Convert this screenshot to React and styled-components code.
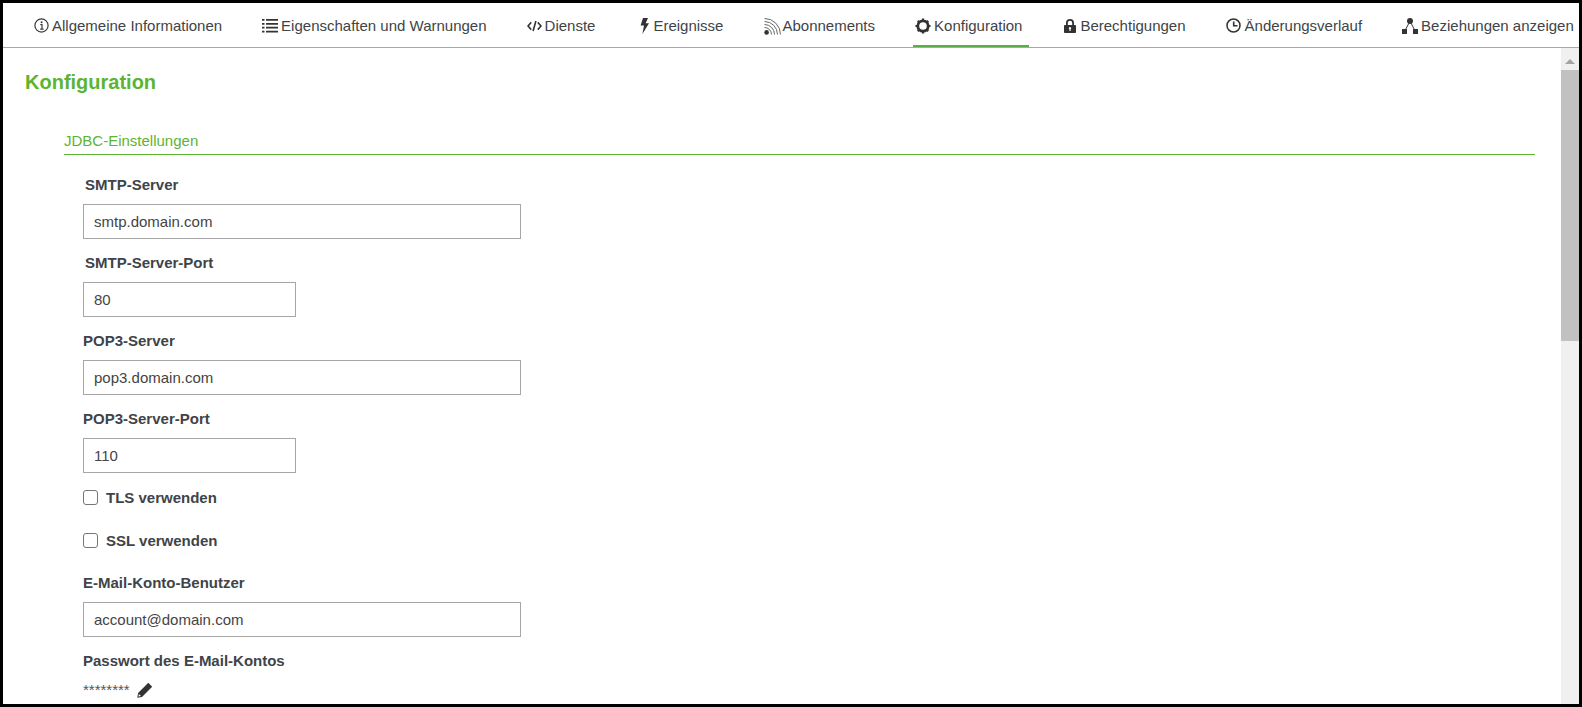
import React from "react";
import styled, { createGlobalStyle } from "styled-components";

const Global = createGlobalStyle`
  html, body { margin: 0; padding: 0; height: 100%; overflow: hidden; background: #fff; }
  * { box-sizing: border-box; }
`;

const Frame = styled.div`
  height: 707px;
  width: 1582px;
  border: 3px solid #000;
  display: flex;
  flex-direction: column;
  background: #fff;
  font-family: "Liberation Sans", Arial, sans-serif;
  color: #404448;
`;

const TabBar = styled.nav`
  height: 45px;
  flex: none;
  display: flex;
  align-items: stretch;
  padding-left: 29px;
  border-bottom: 1px solid #a9a9a9;
  overflow: hidden;
`;

const Tab = styled.a`
  display: flex;
  align-items: center;
  gap: ${(p) => p.$gap ?? 3}px;
  height: 45px;
  padding: 3px 7px 0 2px;
  margin-right: ${(p) => p.$after}px;
  font-size: 15px;
  white-space: nowrap;
  color: #404448;
  border-bottom: 3px solid ${(p) => (p.$active ? "#5cae47" : "transparent")};
  svg { flex: none; display: block; }
`;

const Body = styled.div`
  flex: 1;
  min-height: 0;
  display: flex;
`;

const Content = styled.main`
  flex: 1;
  min-width: 0;
  overflow: hidden;
  padding: 0 26px 0 22px;
`;

const ScrollRail = styled.div`
  flex: none;
  width: 18px;
  display: flex;
  flex-direction: column;
  background: #f0f0f0;
`;

const ScrollUp = styled.div`
  height: 22px;
  display: flex;
  justify-content: center;
  padding-top: 11px;
  &::before {
    content: "";
    width: 0;
    height: 0;
    border-left: 5px solid transparent;
    border-right: 5px solid transparent;
    border-bottom: 5px solid #a3a3a3;
  }
`;

const ScrollThumb = styled.div`
  height: 271px;
  background: #c1c1c1;
`;

const PageTitle = styled.h1`
  margin: 22px 0 0;
  font-size: 20px;
  line-height: 24px;
  font-weight: 700;
  color: #5cb531;
`;

const Section = styled.section`
  margin: 37px 0 0 39px;
`;

const SectionTitle = styled.h2`
  margin: 0;
  padding-bottom: 3px;
  font-size: 15px;
  line-height: 20px;
  font-weight: 400;
  color: #5cb531;
  border-bottom: 1px solid #5cb531;
`;

const Fields = styled.div`
  padding: 20px 0 0 19px;
`;

const Field = styled.div`
  margin-bottom: 14.5px;
`;

const Label = styled.label`
  display: block;
  height: 20px;
  line-height: 20px;
  margin: 0 0 8.5px ${(p) => p.$indent ?? 0}px;
  font-size: 15px;
  font-weight: 700;
`;

const TextInput = styled.input`
  display: block;
  width: ${(p) => (p.$short ? 213 : 438)}px;
  height: 35px;
  padding: 0 10px;
  border: 1px solid #a6a6a6;
  border-radius: 0;
  outline: none;
  background: #fff;
  font-family: inherit;
  font-size: 15px;
  color: #444;
`;

const CheckRow = styled.div`
  display: flex;
  align-items: center;
  gap: 8px;
  height: 20px;
  margin-bottom: 23px;
  font-size: 15px;
  font-weight: 700;
`;

const CheckBox = styled.input`
  appearance: none;
  width: 15px;
  height: 15px;
  margin: 0;
  border: 1px solid #767676;
  border-radius: 3px;
  background: #fff;
`;

const PasswordRow = styled.div`
  display: flex;
  align-items: center;
  gap: 7px;
  margin-top: 1px;
  font-size: 15px;
  line-height: 20px;
  color: #555;
`;

const Info = () => (
  <svg width="15" height="15" viewBox="0 0 15 15" fill="none" stroke="#3a3a3a">
    <circle cx="7.5" cy="7.5" r="6.6" strokeWidth="1.2" />
    <path d="M6.3 6.6H8V11M6.2 11.2h3.4" strokeWidth="1.2" />
    <circle cx="7.6" cy="4.3" r="1" fill="#3a3a3a" stroke="none" />
  </svg>
);
const ListIcon = () => (
  <svg width="16" height="15" viewBox="0 0 16 15" fill="#333">
    <path d="M0 1h2.5v1.800H0zM4 1h12v1.800H4zM0 4.900h2.500v1.800H0zM4 4.900h12v1.800H4zM0 8.800h2.500v1.800H0zM4 8.800h12v1.800H4zM0 12.700h2.500v1.800H0zM4 12.700h12v1.800H4z" />
  </svg>
);
const Code = () => (
  <svg width="15" height="12" viewBox="0 0 15 12" fill="none" stroke="#333" strokeWidth="1.6">
    <path d="M4.200 2.400 1 6l3.200 3.600M10.800 2.400 14 6l-3.200 3.600M8.900 1 6.100 11" />
  </svg>
);
const Bolt = () => (
  <svg width="9" height="16" viewBox="0 0 9 16" fill="#333">
    <path d="M3 0h5L5.700 5.200H9L2.400 16l1.600-8.400H.6z" />
  </svg>
);
const Rss = () => (
  <svg width="18" height="18" viewBox="0 0 18 18" fill="none" stroke="#555" strokeWidth="0.9">
    <circle cx="2.600" cy="15.400" r="2.300" fill="#333" stroke="none" />
    <path d="M.5 10.500a7 7 0 0 1 7 7M.5 7.500a10 10 0 0 1 10 10M.5 4.500a13 13 0 0 1 13 13M.5 1.500a16 16 0 0 1 16 16" />
  </svg>
);
const Gear = () => (
  <svg width="16" height="16" viewBox="0 0 16 16" fill="none" stroke="#333">
    <circle cx="8" cy="8" r="5.200" strokeWidth="2.800" />
    <path d="M8 .5v2M8 13.500v2M.5 8h2M13.500 8h2M2.800 2.800l1.400 1.400M11.800 11.800l1.400 1.400M13.200 2.800l-1.400 1.400M4.200 11.800l-1.400 1.400" strokeWidth="2.200" />
  </svg>
);
const Lock = () => (
  <svg width="12" height="14" viewBox="0 0 12 14" fill="#333">
    <path fillRule="evenodd" d="M2 6V4a4 4 0 0 1 8 0v2h1.200c.4 0 .8.400.8.800v6.400c0 .4-.4.8-.8.8H.8c-.4 0-.8-.4-.8-.8V6.800C0 6.400.4 6 .8 6zm1.800 0h4.400V4a2.200 2.200 0 0 0-4.400 0zM6 8a1.200 1.200 0 0 0-.6 2.200V12h1.200v-1.800A1.200 1.200 0 0 0 6 8z" />
  </svg>
);
const Clock = () => (
  <svg width="15" height="15" viewBox="0 0 15 15" fill="none" stroke="#333">
    <circle cx="7.500" cy="7.500" r="6.500" strokeWidth="1.500" />
    <path d="M7.700 3.500v4.300H11.500" strokeWidth="1.600" />
  </svg>
);
const Tree = () => (
  <svg width="16" height="16" viewBox="0 0 16 16" fill="#333">
    <circle cx="8" cy="3" r="3" />
    <path d="M0 11h5v5H0zM11 11h5v5h-5z" />
    <path d="M7 5 3.600 11.500M9 5l3.400 6.500" stroke="#333" fill="none" strokeWidth="1" />
  </svg>
);
const Pencil = () => (
  <svg width="16" height="16" viewBox="0 0 16 16" fill="#333">
    <path d="M11.300.8 15.200 4.700 5 14.900.3 15.700 1.100 11zM1.900 12 1.500 14.500 4 14.100z" fillRule="evenodd" />
  </svg>
);

const tabs = [
  { label: "Allgemeine Informationen", Icon: Info, after: 31 },
  { label: "Eigenschaften und Warnungen", Icon: ListIcon, after: 31 },
  { label: "Dienste", Icon: Code, after: 36 },
  { label: "Ereignisse", Icon: Bolt, after: 32, gap: 4 },
  { label: "Abonnements", Icon: Rss, after: 31, gap: 0 },
  { label: "Konfiguration", Icon: Gear, after: 33 },
  { label: "Berechtigungen", Icon: Lock, after: 31, gap: 4 },
  { label: "Änderungsverlauf", Icon: Clock, after: 31, gap: 4 },
  { label: "Beziehungen anzeigen", Icon: Tree, after: 0 },
].map((t) => ({ ...t, active: t.label === "Konfiguration" }));

const TextField = ({ label, value, short, indent }) => (
  <Field>
    <Label $indent={indent}>{label}</Label>
    <TextInput type="text" defaultValue={value} $short={short} />
  </Field>
);

export default function App() {
  return (
    <>
      <Global />
      <Frame>
        <TabBar>
          {tabs.map(({ label, Icon, after, gap, active }) => (
            <Tab key={label} $after={after} $gap={gap} $active={active}>
              <Icon />
              {label}
            </Tab>
          ))}
        </TabBar>
        <Body>
          <Content>
            <PageTitle>Konfiguration</PageTitle>
            <Section>
              <SectionTitle>JDBC-Einstellungen</SectionTitle>
              <Fields>
                <TextField label="SMTP-Server" value="smtp.domain.com" indent={2} />
                <TextField label="SMTP-Server-Port" value="80" short indent={2} />
                <TextField label="POP3-Server" value="pop3.domain.com" />
                <TextField label="POP3-Server-Port" value="110" short />
                <CheckRow>
                  <CheckBox type="checkbox" />
                  TLS verwenden
                </CheckRow>
                <CheckRow>
                  <CheckBox type="checkbox" />
                  SSL verwenden
                </CheckRow>
                <TextField label="E-Mail-Konto-Benutzer" value="account@domain.com" />
                <Label>Passwort des E-Mail-Kontos</Label>
                <PasswordRow>
                  ********
                  <Pencil />
                </PasswordRow>
              </Fields>
            </Section>
          </Content>
          <ScrollRail>
            <ScrollUp />
            <ScrollThumb />
          </ScrollRail>
        </Body>
      </Frame>
    </>
  );
}
